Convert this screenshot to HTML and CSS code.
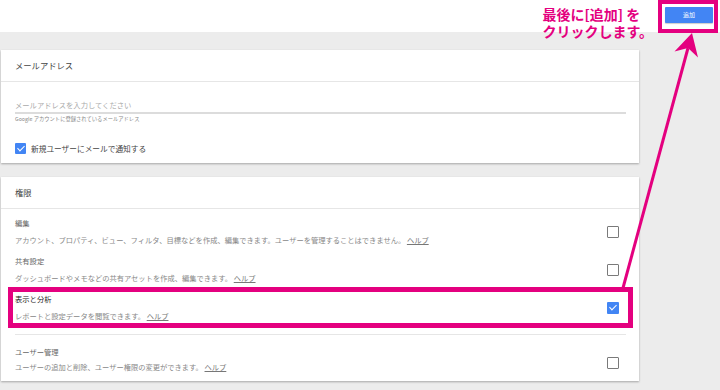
FILE: index.html
```html
<!DOCTYPE html>
<html>
<head>
  <link rel="stylesheet" href="styles.css">
</head>
<body>
  <div class="topbar">
    <div class="note">
      <div class="note-line">最後に[追加] を</div>
      <div class="note-line">クリックします。</div>
    </div>
    <div class="callout">
      <button class="add-btn">追加</button>
    </div>
  </div>

  <div class="main">
    <div class="card">
      <div class="card-head">メールアドレス</div>
      <div class="email-body">
        <div class="email-input">メールアドレスを入力してください</div>
        <div class="hint">Google アカウントに登録されているメールアドレス</div>
        <div class="notify">
          <span class="check on"></span>
          <span>新規ユーザーにメールで通知する</span>
        </div>
      </div>
    </div>

    <div class="card">
      <div class="card-head">権限</div>
      <div class="perm-list">
        <div class="perm">
          <div class="perm-text">
            <div class="perm-title">編集</div>
            <div class="perm-desc">アカウント、プロパティ、ビュー、フィルタ、目標などを作成、編集できます。ユーザーを管理することはできません。 <a href="#">ヘルプ</a></div>
          </div>
          <span class="check"></span>
        </div>
        <div class="perm">
          <div class="perm-text">
            <div class="perm-title">共有設定</div>
            <div class="perm-desc">ダッシュボードやメモなどの共有アセットを作成、編集できます。 <a href="#">ヘルプ</a></div>
          </div>
          <span class="check"></span>
        </div>
        <div class="perm picked">
          <div class="perm-text">
            <div class="perm-title">表示と分析</div>
            <div class="perm-desc">レポートと設定データを閲覧できます。 <a href="#">ヘルプ</a></div>
          </div>
          <span class="check on"></span>
          <span class="mark"></span>
        </div>
        <div class="perm last">
          <div class="perm-text">
            <div class="perm-title">ユーザー管理</div>
            <div class="perm-desc">ユーザーの追加と削除、ユーザー権限の変更ができます。 <a href="#">ヘルプ</a></div>
          </div>
          <span class="check"></span>
        </div>
      </div>
    </div>
  </div>

  <!-- annotation arrow from the highlighted row to the add button -->
  <svg class="arrow" width="720" height="390" viewBox="0 0 720 390">
    <line x1="623" y1="288" x2="688" y2="48" stroke="#e4007f" stroke-width="3"/>
    <polygon points="692,33 674.5,51.5 688,48 698,57.5" fill="#e4007f"/>
  </svg>
</body>
</html>
```

FILE: styles.css
```css
body {
  margin: 0;
  width: 720px;
  height: 390px;
  overflow: hidden;
  position: relative;
  font-family: "Noto Sans CJK JP", "Noto Sans", sans-serif;
  color: #444;
  background: #ececec;
}

.topbar {
  display: flex;
  justify-content: flex-end;
  align-items: flex-start;
  height: 32px;
  padding-right: 2px;
  background: #fff;
}

.note {
  padding-top: 7px;
  margin-right: 5px;
  font-size: 14px;
  font-weight: 700;
  color: #e4007f;
  white-space: nowrap;
}

.note-line {
  height: 17px;
  line-height: 15px;
}

.callout {
  border: 4px solid #e4007f;
  padding: 3px 1px 6px 3px;
  background: #fff;
}

.add-btn {
  display: block;
  width: 48px;
  height: 16px;
  padding: 0;
  border: none;
  border-radius: 1px;
  background: #4285f4;
  color: #fff;
  font-family: inherit;
  font-size: 6px;
  line-height: 16px;
  box-shadow: 0 1px 1px rgba(0, 0, 0, 0.2);
}

.main {
  padding: 18px 0 0 1px;
}

.card {
  width: 638px;
  background: #fff;
  box-shadow: 0 1px 2px rgba(0, 0, 0, 0.3);
  margin-bottom: 14px;
}

.card-head {
  height: 31px;
  line-height: 31px;
  padding-left: 14px;
  font-size: 8.3px;
  color: #444;
  border-bottom: 1px solid #e6e6e6;
}

.email-body {
  padding: 16px 13px 9px 14px;
}

.email-input {
  height: 14px;
  line-height: 14px;
  font-size: 7.3px;
  color: #aaa;
  border-bottom: 2px solid #dcdcdc;
}

.hint {
  margin-top: 1px;
  line-height: 8px;
  font-size: 5.3px;
  color: #888;
}

.notify {
  display: flex;
  align-items: center;
  gap: 5px;
  margin-top: 19px;
  height: 12px;
  font-size: 7.7px;
  color: #444;
}

.notify .check {
  width: 11px;
  height: 11px;
  margin: 0;
}

.check {
  flex: none;
  box-sizing: border-box;
  width: 12px;
  height: 12px;
  margin-right: 7px;
  border: 1.5px solid #7a7a7a;
  border-radius: 1px;
}

.check.on {
  border: none;
  background: #4285f4;
  position: relative;
}

.check.on::after {
  content: "";
  position: absolute;
  left: 3.5px;
  top: 1.5px;
  width: 3px;
  height: 6px;
  border: solid #fff;
  border-width: 0 1.5px 1.5px 0;
  transform: rotate(45deg);
}

.perm-list {
  padding: 4px 13px 4px 14px;
}

.perm {
  display: flex;
  align-items: center;
  justify-content: space-between;
  padding: 3px 0 4px;
}

.perm-title {
  line-height: 14px;
  font-size: 7.3px;
  color: #666;
}

.perm-desc {
  margin-top: 3px;
  line-height: 14px;
  font-size: 7.27px;
  color: #888;
  white-space: nowrap;
}

.perm-desc a {
  color: #777;
  text-decoration: underline;
}

.perm.picked {
  position: relative;
}

.perm.picked .perm-title {
  color: #222;
}

.mark {
  position: absolute;
  left: -7px;
  right: -7px;
  top: -2px;
  bottom: -1px;
  border: 5px solid #e4007f;
}

.perm.last {
  margin-top: 7px;
  border-top: 1px solid #e6e6e6;
  padding: 10px 0 3px;
}

.perm.last .perm-desc {
  margin-top: 1px;
}

.perm.last .check {
  margin-top: 6px;
}

.arrow {
  position: absolute;
  left: 0;
  top: 0;
  pointer-events: none;
}
```
